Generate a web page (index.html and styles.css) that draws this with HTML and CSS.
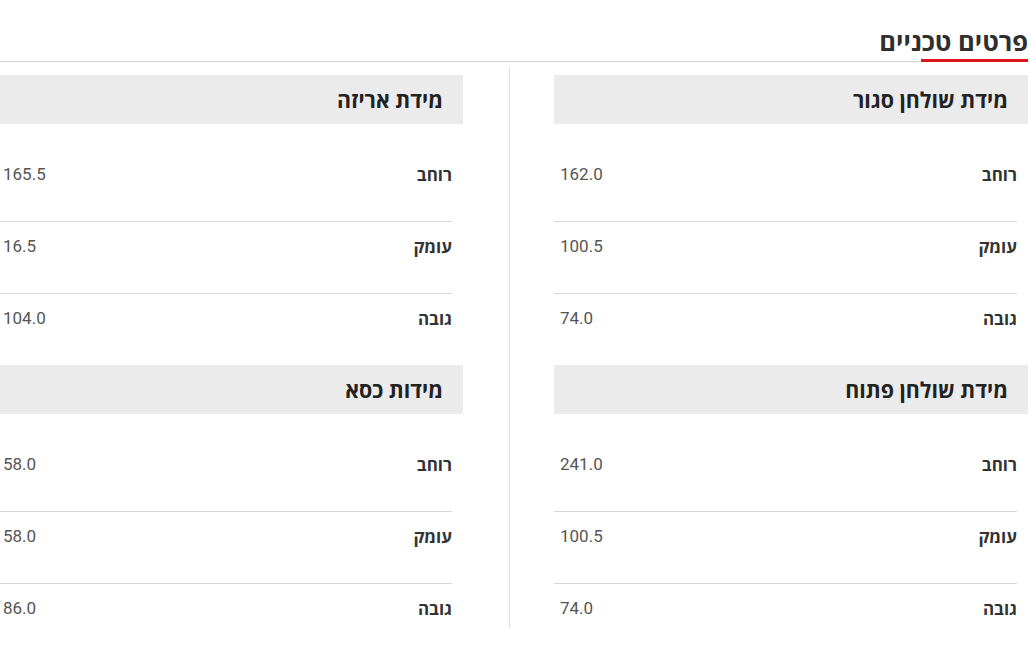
FILE: index.html
```html
<!DOCTYPE html>
<html lang="he" dir="rtl">
<head>
<meta charset="utf-8">
<title>פרטים טכניים</title>
<link rel="stylesheet" href="styles.css">
</head>
<body>
<div class="page">
  <div class="title-bar">
    <h2 class="title">פרטים טכניים</h2>
  </div>
  <div class="cols">
    <div class="col col-right">
      <section class="section">
        <h3 class="sec-head">מידת שולחן סגור</h3>
        <div class="row"><span class="label">רוחב</span><span class="value">162.0</span></div>
        <div class="row"><span class="label">עומק</span><span class="value">100.5</span></div>
        <div class="row"><span class="label">גובה</span><span class="value">74.0</span></div>
      </section>
      <section class="section">
        <h3 class="sec-head">מידת שולחן פתוח</h3>
        <div class="row"><span class="label">רוחב</span><span class="value">241.0</span></div>
        <div class="row"><span class="label">עומק</span><span class="value">100.5</span></div>
        <div class="row"><span class="label">גובה</span><span class="value">74.0</span></div>
      </section>
    </div>
    <div class="divider"></div>
    <div class="col col-left">
      <section class="section">
        <h3 class="sec-head">מידת אריזה</h3>
        <div class="row"><span class="label">רוחב</span><span class="value">165.5</span></div>
        <div class="row"><span class="label">עומק</span><span class="value">16.5</span></div>
        <div class="row"><span class="label">גובה</span><span class="value">104.0</span></div>
      </section>
      <section class="section">
        <h3 class="sec-head">מידות כסא</h3>
        <div class="row"><span class="label">רוחב</span><span class="value">58.0</span></div>
        <div class="row"><span class="label">עומק</span><span class="value">58.0</span></div>
        <div class="row"><span class="label">גובה</span><span class="value">86.0</span></div>
      </section>
    </div>
  </div>
</div>
</body>
</html>
```

FILE: styles.css
```css
html, body {
  margin: 0;
  padding: 0;
  background: #ffffff;
  overflow: hidden;
}

body {
  font-family: "Open Sans", "DejaVu Sans", sans-serif;
  color: #333333;
}

.page {
  width: 1028px;
  margin-right: 2px;
  direction: rtl;
}

.title-bar {
  padding-top: 26px;
  border-bottom: 1px solid #d4d4d4;
  display: flex;
}

.title {
  position: relative;
  margin: 0;
  padding: 0 0 5px 0;
  font-size: 25.5px;
  line-height: 30px;
  font-weight: 700;
  color: #2f2f2f;
}

.title::after {
  content: "";
  position: absolute;
  right: 0;
  bottom: -1px;
  width: 107px;
  height: 3px;
  background: #e1141d;
}

.cols {
  display: flex;
  margin-top: 5px;
}

.col {
  flex: 0 0 auto;
  padding-top: 8px;
}

.col-right {
  width: 474px;
  margin-left: 44px;
}

.col-left {
  width: 466px;
  margin-right: 46px;
}

.divider {
  flex: 0 0 1px;
  background: #dcdcdc;
}

.sec-head {
  margin: 0 0 26px 0;
  height: 49px;
  padding-right: 20px;
  display: flex;
  align-items: center;
  background: #ebebeb;
  font-size: 21.4px;
  font-weight: 700;
  color: #222222;
}

.row {
  display: flex;
  justify-content: space-between;
  align-items: center;
  margin-right: 11px;
  height: 20px;
  padding: 14px 0 37px 6px;
  border-bottom: 1px solid #d8d8d8;
}

.row:last-child {
  border-bottom: none;
}

.section:last-child .row:last-child {
  padding-bottom: 10px;
}

.label {
  font-size: 17px;
  font-weight: 700;
  color: #333333;
}

.value {
  font-family: Roboto, "Liberation Sans", sans-serif;
  font-size: 17px;
  color: #555555;
  direction: ltr;
}
```
